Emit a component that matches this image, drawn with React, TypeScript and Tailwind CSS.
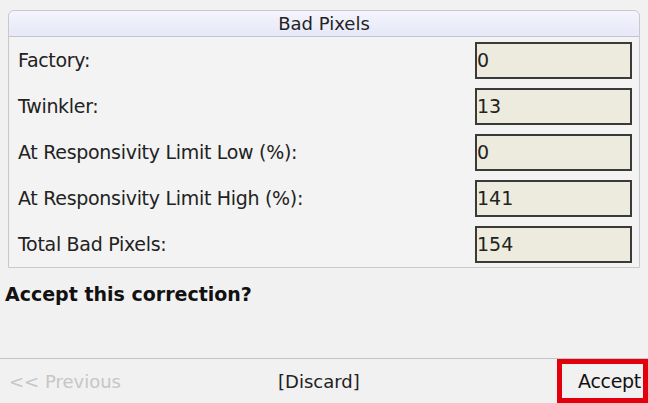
import React from 'react';

const rows = [
  { label: 'Factory:', value: '0' },
  { label: 'Twinkler:', value: '13' },
  { label: 'At Responsivity Limit Low (%):', value: '0' },
  { label: 'At Responsivity Limit High (%):', value: '141' },
  { label: 'Total Bad Pixels:', value: '154' },
];

export default function App() {
  return (
    <div className="w-[648px] h-[403px] bg-[#f1f1f1] flex flex-col overflow-hidden font-['DejaVu_Sans',sans-serif] text-[#222]">
      {/* group box */}
      <div className="mt-[10px] ml-[8px] mr-[8px] border border-[#c9c9cc] rounded-t-[6px] bg-[#f3f3f3]">
        <div className="h-[26px] flex items-center justify-center border-b border-[#c2c4cc] rounded-t-[6px] bg-gradient-to-b from-[#f4f4fd] to-[#e7e8f8] text-[18px] leading-none">
          Bad Pixels
        </div>
        <div className="flex flex-col gap-[9px] pt-[5px] pb-[4px] pr-[7px]">
          {rows.map((r) => (
            <div key={r.label} className="flex items-center h-[37px]">
              <div className="flex-1 pl-[9px] text-[19px] tracking-[-0.3px]">{r.label}</div>
              <div className="w-[157px] h-[37px] border-2 border-[#3a3a36] bg-[#ecebdd] flex items-center text-[19px]">
                {r.value}
              </div>
            </div>
          ))}
        </div>
      </div>

      <div className="pl-[5px] pt-[12px] text-[19px] font-bold text-[#111]">
        Accept this correction?
      </div>

      <div className="flex-1" />

      {/* footer buttons */}
      <div className="h-[45px] border-t border-[#c4c4c4] flex items-center text-[18px]">
        <div className="w-[270px] pl-[9px] text-[#c6c6c6]">&lt;&lt; Previous</div>
        <div className="w-[287px] pl-[8px]">[Discard]</div>
        <div className="flex-1 h-full border-[5px] border-[#e3000c] flex items-center justify-end pr-[2px] text-[19px] text-[#111] tracking-[-0.3px]">
          Accept
        </div>
      </div>
    </div>
  );
}
